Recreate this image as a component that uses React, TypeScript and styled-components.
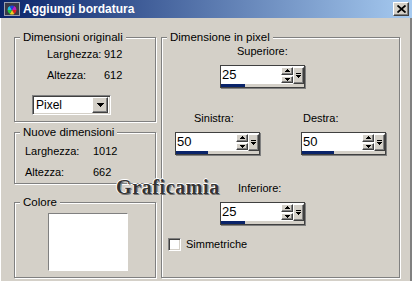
import styled, { createGlobalStyle, css } from 'styled-components';

const GlobalStyle = createGlobalStyle`
  html, body {
    margin: 0;
    padding: 0;
    background: #d4d0c8;
  }
  body {
    font-family: 'Liberation Sans', Arial, sans-serif;
    font-size: 11px;
    color: #000;
  }
  * {
    box-sizing: border-box;
  }
`;

const raised = css`
  background: #d4d0c8;
  border: 1px solid;
  border-color: #fff #404040 #404040 #fff;
  box-shadow: inset -1px -1px 0 #808080;
`;

const sunken = css`
  border: 1px solid;
  border-color: #808080 #fff #fff #808080;
  box-shadow: inset 1px 1px 0 #404040, inset -1px -1px 0 #d4d0c8;
`;

const Window = styled.div`
  position: relative;
  width: 412px;
  height: 281px;
  display: flex;
  flex-direction: column;
  background: #d4d0c8;
  overflow: hidden;
`;

const TitleBar = styled.div`
  height: 18px;
  display: flex;
  align-items: center;
  padding: 0 3px 0 4px;
  background: linear-gradient(to right, #0a246a, #a6caf0);
`;

const Title = styled.span`
  flex: 1;
  margin-left: 3px;
  color: #fff;
  font-weight: bold;
  font-size: 12px;
  line-height: 18px;
`;

const CloseButton = styled.div`
  ${raised};
  width: 16px;
  height: 14px;
  display: flex;
  align-items: center;
  justify-content: center;
`;

const Body = styled.div`
  flex: 1;
  display: flex;
  gap: 5px;
  padding: 13px 0 0 14px;
  box-shadow: inset 1px 0 0 #fff, inset -2px 0 0 #808080;
`;

const Column = styled.div<{ $w: number }>`
  width: ${(p) => p.$w}px;
  display: flex;
  flex-direction: column;
`;

const Group = styled.fieldset<{ $h: number; $top?: number }>`
  margin: ${(p) => p.$top ?? 0}px 0 0 0;
  padding: 0;
  min-width: 0;
  height: ${(p) => p.$h}px;
  border: 1px solid #808080;
  box-shadow: inset 1px 1px 0 #fff, 1px 1px 0 #fff;
`;

const Legend = styled.legend`
  margin-left: 5px;
  padding: 0 3px;
  font-size: 11.5px;
  line-height: 13px;
  background: #d4d0c8;
`;

const InfoGrid = styled.div<{ $top: number; $left: number; $label: number }>`
  display: grid;
  grid-template-columns: ${(p) => p.$label}px auto;
  row-gap: 8px;
  margin-top: ${(p) => p.$top}px;
  padding-left: ${(p) => p.$left}px;
  line-height: 13px;
`;

const Select = styled.div`
  ${sunken};
  margin: 13px 0 0 17px;
  width: 79px;
  height: 20px;
  padding: 2px;
  display: flex;
  align-items: center;
  background: #fff;
`;

const SelectText = styled.span`
  flex: 1;
  padding-left: 1px;
  font-size: 12px;
`;

const SelectButton = styled.div`
  ${raised};
  width: 16px;
  height: 16px;
  display: flex;
  align-items: center;
  justify-content: center;
`;

const Swatch = styled.div`
  margin: 4px 0 0 33px;
  width: 80px;
  height: 58px;
  background: #fff;
  border: 1px solid;
  border-color: #808080 #fff #fff #808080;
`;

const PixelPanel = styled.div`
  display: flex;
  flex-direction: column;
`;

const Field = styled.div<{ $top: number; $left?: number }>`
  display: flex;
  flex-direction: column;
  gap: 7px;
  margin-top: ${(p) => p.$top}px;
  margin-left: ${(p) => p.$left ?? 0}px;
`;

const FieldLabel = styled.span<{ $indent: number }>`
  padding-left: ${(p) => p.$indent}px;
  line-height: 13px;
`;

const SideRow = styled.div`
  display: flex;
  gap: 41px;
  margin-top: 24px;
  padding-left: 13px;
`;

const SpinBox = styled.div`
  width: 85px;
  height: 23px;
  display: grid;
  grid-template-columns: 1fr 12px 11px;
  grid-template-rows: 18px 3px;
  border: 1px solid #404040;
  background: #fff;
  box-shadow: 1px 1px 0 #808080;
`;

const SpinValue = styled.span`
  padding-left: 1px;
  font-size: 13px;
  line-height: 18px;
`;

const SpinButtons = styled.div`
  display: flex;
  flex-direction: column;
  padding-top: 1px;
`;

const SpinButton = styled.div`
  ${raised};
  height: 8px;
  margin-bottom: 1px;
  display: flex;
  align-items: center;
  justify-content: center;
`;

const SliderButton = styled.div`
  ${raised};
  margin: 1px 0 0 0;
  height: 17px;
  display: flex;
  align-items: center;
  justify-content: center;
`;

const Track = styled.div`
  grid-column: 1 / -1;
  background: #d4d0c8;
`;

const Fill = styled.div<{ $w: number }>`
  width: ${(p) => p.$w}px;
  height: 100%;
  background: #0a246a;
`;

const CheckRow = styled.label`
  display: flex;
  align-items: center;
  gap: 5px;
  margin: 13px 0 0 6px;
  line-height: 13px;
`;

const CheckBox = styled.span`
  ${sunken};
  width: 13px;
  height: 13px;
  background: #fff;
`;

const Watermark = styled.div`
  position: absolute;
  left: 116px;
  top: 176px;
  font-family: 'Liberation Serif', 'Times New Roman', serif;
  font-weight: bold;
  font-size: 20px;
  letter-spacing: 0.6px;
  color: #333;
  text-shadow: -1px 0 0 #fff, 0 -1px 0 #fff, 1px 1px 0 #777;
`;

function DownArrow({ w = 5 }: { w?: number }) {
  const rows = Math.ceil(w / 2);
  return (
    <svg width={w} height={rows} shapeRendering="crispEdges">
      {Array.from({ length: rows }, (_, i) => (
        <rect key={i} x={i} y={i} width={w - i * 2} height={1} fill="#000" />
      ))}
    </svg>
  );
}

function UpArrow({ w = 5 }: { w?: number }) {
  const rows = Math.ceil(w / 2);
  return (
    <svg width={w} height={rows} shapeRendering="crispEdges">
      {Array.from({ length: rows }, (_, i) => (
        <rect key={i} x={rows - 1 - i} y={i} width={w - (rows - 1 - i) * 2} height={1} fill="#000" />
      ))}
    </svg>
  );
}

function SliderIcon() {
  return (
    <svg width={5} height={6} shapeRendering="crispEdges">
      <rect x={0} y={0} width={5} height={1} fill="#000" />
      <rect x={0} y={2} width={5} height={1} fill="#000" />
      <rect x={1} y={3} width={3} height={1} fill="#000" />
      <rect x={2} y={4} width={1} height={1} fill="#000" />
    </svg>
  );
}

function AppIcon() {
  const cx = 8;
  const cy = 9;
  const r = 4.5;
  const colors = ['#e02020', '#f0d020', '#20c040', '#20c0e0', '#2040e0', '#c020c0'];
  const pt = (a: number) => [cx + r * Math.cos((a * Math.PI) / 180), cy + r * Math.sin((a * Math.PI) / 180)];
  return (
    <svg width={16} height={16}>
      <rect x={0.5} y={1.5} width={15} height={13} fill="#3a3a48" stroke="#9aa0b0" />
      {colors.map((c, i) => {
        const [x1, y1] = pt(i * 60);
        const [x2, y2] = pt(i * 60 + 60);
        return <path key={c} d={`M${cx} ${cy}L${x1} ${y1}A${r} ${r} 0 0 1 ${x2} ${y2}Z`} fill={c} />;
      })}
    </svg>
  );
}

function Spinner({ value, fill }: { value: string; fill: number }) {
  return (
    <SpinBox>
      <SpinValue>{value}</SpinValue>
      <SpinButtons>
        <SpinButton>
          <UpArrow w={5} />
        </SpinButton>
        <SpinButton>
          <DownArrow w={5} />
        </SpinButton>
      </SpinButtons>
      <SliderButton>
        <SliderIcon />
      </SliderButton>
      <Track>
        <Fill $w={fill} />
      </Track>
    </SpinBox>
  );
}

export default function App() {
  return (
    <>
      <GlobalStyle />
      <Window>
        <TitleBar>
          <AppIcon />
          <Title>Aggiungi bordatura</Title>
          <CloseButton>
            <svg width={9} height={8}>
              <path d="M0.5 0.5L8.5 7.5M8.5 0.5L0.5 7.5" stroke="#000" strokeWidth={1.8} />
            </svg>
          </CloseButton>
        </TitleBar>
        <Body>
          <Column $w={142}>
            <Group $h={91}>
              <Legend>Dimensioni originali</Legend>
              <InfoGrid $top={4} $left={32} $label={57}>
                <span>Larghezza:</span>
                <span>912</span>
                <span>Altezza:</span>
                <span>612</span>
              </InfoGrid>
              <Select>
                <SelectText>Pixel</SelectText>
                <SelectButton>
                  <DownArrow w={7} />
                </SelectButton>
              </Select>
            </Group>
            <Group $h={58} $top={4}>
              <Legend>Nuove dimensioni</Legend>
              <InfoGrid $top={6} $left={10} $label={68}>
                <span>Larghezza:</span>
                <span>1012</span>
                <span>Altezza:</span>
                <span>662</span>
              </InfoGrid>
            </Group>
            <Group $h={82} $top={12}>
              <Legend>Colore</Legend>
              <Swatch />
            </Group>
          </Column>
          <Column $w={239}>
            <Group $h={247}>
              <Legend>Dimensione in pixel</Legend>
              <PixelPanel>
                <Field $top={1} $left={58}>
                  <FieldLabel $indent={17}>Superiore:</FieldLabel>
                  <Spinner value="25" fill={24} />
                </Field>
                <SideRow>
                  <Field $top={0}>
                    <FieldLabel $indent={19}>Sinistra:</FieldLabel>
                    <Spinner value="50" fill={32} />
                  </Field>
                  <Field $top={0}>
                    <FieldLabel $indent={2}>Destra:</FieldLabel>
                    <Spinner value="50" fill={32} />
                  </Field>
                </SideRow>
                <Field $top={27} $left={58}>
                  <FieldLabel $indent={18}>Inferiore:</FieldLabel>
                  <Spinner value="25" fill={24} />
                </Field>
                <CheckRow>
                  <CheckBox />
                  <span>Simmetriche</span>
                </CheckRow>
              </PixelPanel>
            </Group>
          </Column>
        </Body>
        <Watermark>Graficamia</Watermark>
      </Window>
    </>
  );
}
